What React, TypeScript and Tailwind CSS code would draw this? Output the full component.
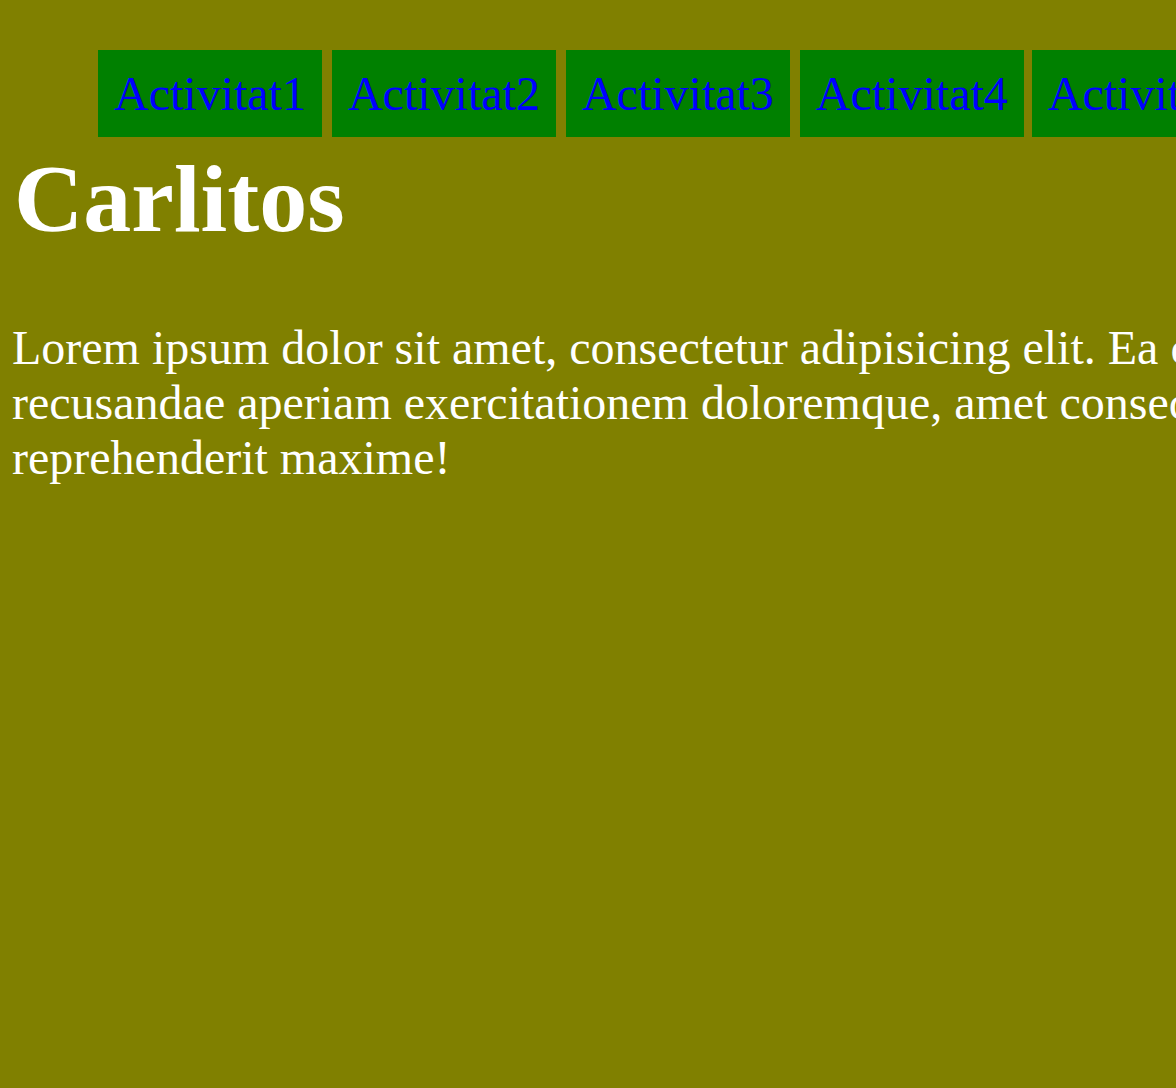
import React from 'react';

const activitats = ['Activitat1', 'Activitat2', 'Activitat3', 'Activitat4', 'Activitat5'];

export default function App() {
  return (
    <div className="h-[1088px] w-full overflow-hidden bg-[#808000] font-['Liberation_Serif',serif]">
      {/* Menu */}
      <ul className="mt-[50px] ml-[98px] flex gap-[10px] whitespace-nowrap">
        {activitats.map((a, i) => (
          <li key={a} className={i === 4 ? 'ml-[-2px] shrink-0 bg-[#008000] p-4' : 'shrink-0 bg-[#008000] p-4'}>
            <a href="#" className="text-[48px] leading-[normal] text-[#0000ff]">
              {a}
            </a>
          </li>
        ))}
      </ul>

      <div className="pl-3">
        <h1 className="mt-[6px] pl-[2px] text-[96px] font-bold leading-[normal] text-white">Carlitos</h1>
        <p className="mt-[66px] text-[48px] leading-[normal] text-white">
          <span className="block whitespace-nowrap">
            Lorem ipsum dolor sit amet, consectetur adipisicing elit. Ea corporis
          </span>
          <span className="block whitespace-nowrap">
            recusandae aperiam exercitationem doloremque, amet consectetur
          </span>
          <span className="block whitespace-nowrap">reprehenderit maxime!</span>
        </p>
      </div>
    </div>
  );
}
